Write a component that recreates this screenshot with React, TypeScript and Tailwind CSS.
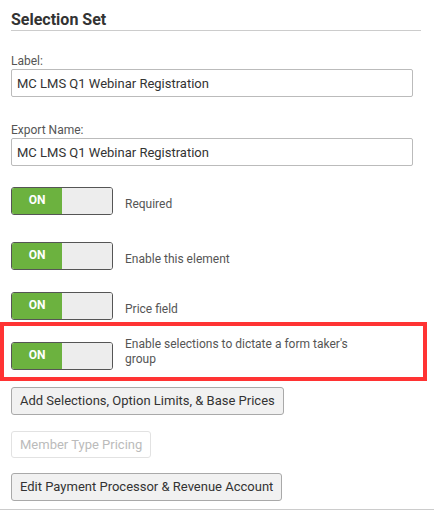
import React from 'react';

const Toggle: React.FC = () => (
    <div className="flex h-[28px] w-[102px] shrink-0 overflow-hidden rounded-[3px] border border-[#555]">
        <div className="flex w-[50px] items-center justify-center bg-[#6cb23f] pb-[2px] text-[12px] font-bold text-white">
            ON
        </div>
        <div className="flex-1 bg-[#ededed]"></div>
    </div>
);

const ToggleRow: React.FC<{ label: string; className?: string; textClass?: string }> = ({ label, className = '', textClass = 'mt-[10px]' }) => (
    <div className={`flex items-start gap-[12px] ${className}`}>
        <Toggle />
        <div className={`text-[12px] leading-[15px] text-[#555] ${textClass}`}>{label}</div>
    </div>
);

export default function App() {
    return (
        <div className="h-[511px] w-[434px] overflow-hidden bg-white font-['Roboto','Liberation_Sans',sans-serif]">
            <div className="px-[11px]">
                {/* Heading */}
                <h2 className="w-[410px] border-b border-[#cccccc] pt-[10px] text-[16px] font-bold leading-[20px] text-[#333]">
                    Selection Set
                </h2>

                {/* Text fields */}
                <label className="mt-[23px] block text-[12px] leading-[15px] text-[#555]">Label:</label>
                <input
                    type="text"
                    readOnly
                    value="MC LMS Q1 Webinar Registration"
                    className="block h-[28px] w-[402px] rounded-[2px] border border-[#bbbbbb] px-[5px] text-[13px] text-[#333] outline-none"
                />

                <label className="mt-[26px] block text-[12px] leading-[15px] text-[#555]">Export Name:</label>
                <input
                    type="text"
                    readOnly
                    value="MC LMS Q1 Webinar Registration"
                    className="block h-[28px] w-[402px] rounded-[2px] border border-[#bbbbbb] px-[5px] text-[13px] text-[#333] outline-none"
                />

                {/* Toggles */}
                <ToggleRow label="Required" className="mt-[21px]" />
                <ToggleRow label="Enable this element" className="mt-[27px]" />
                <ToggleRow label="Price field" className="mt-[22px]" />

                {/* Highlighted row */}
                <div className="-ml-[11px] mt-[2px] w-[427px] border-4 border-[#ff3333] pb-[7px] pl-[7px] pt-[16px]">
                    <ToggleRow
                        label="Enable selections to dictate a form taker's group"
                        textClass="-mt-[5px] w-[236px]"
                    />
                </div>

                {/* Buttons */}
                <div className="flex flex-col items-start">
                    <button className="mt-[6px] h-[28px] rounded-[3px] border border-[#a9a9a9] bg-[#f1f1f1] px-[8px] text-[13px] text-[#333]">
                        Add Selections, Option Limits, &amp; Base Prices
                    </button>
                    <button
                        disabled
                        className="mt-[16px] h-[27px] rounded-[3px] border border-[#e2e2e2] bg-white px-[8px] text-[13px] text-[#bbbbbb]"
                    >
                        Member Type Pricing
                    </button>
                    <button className="mt-[15px] h-[28px] rounded-[3px] border border-[#a9a9a9] bg-[#f1f1f1] px-[8px] text-[13px] text-[#333]">
                        Edit Payment Processor &amp; Revenue Account
                    </button>
                </div>
            </div>
            <div className="mt-[8px] border-t border-[#cccccc]"></div>
        </div>
    );
}
